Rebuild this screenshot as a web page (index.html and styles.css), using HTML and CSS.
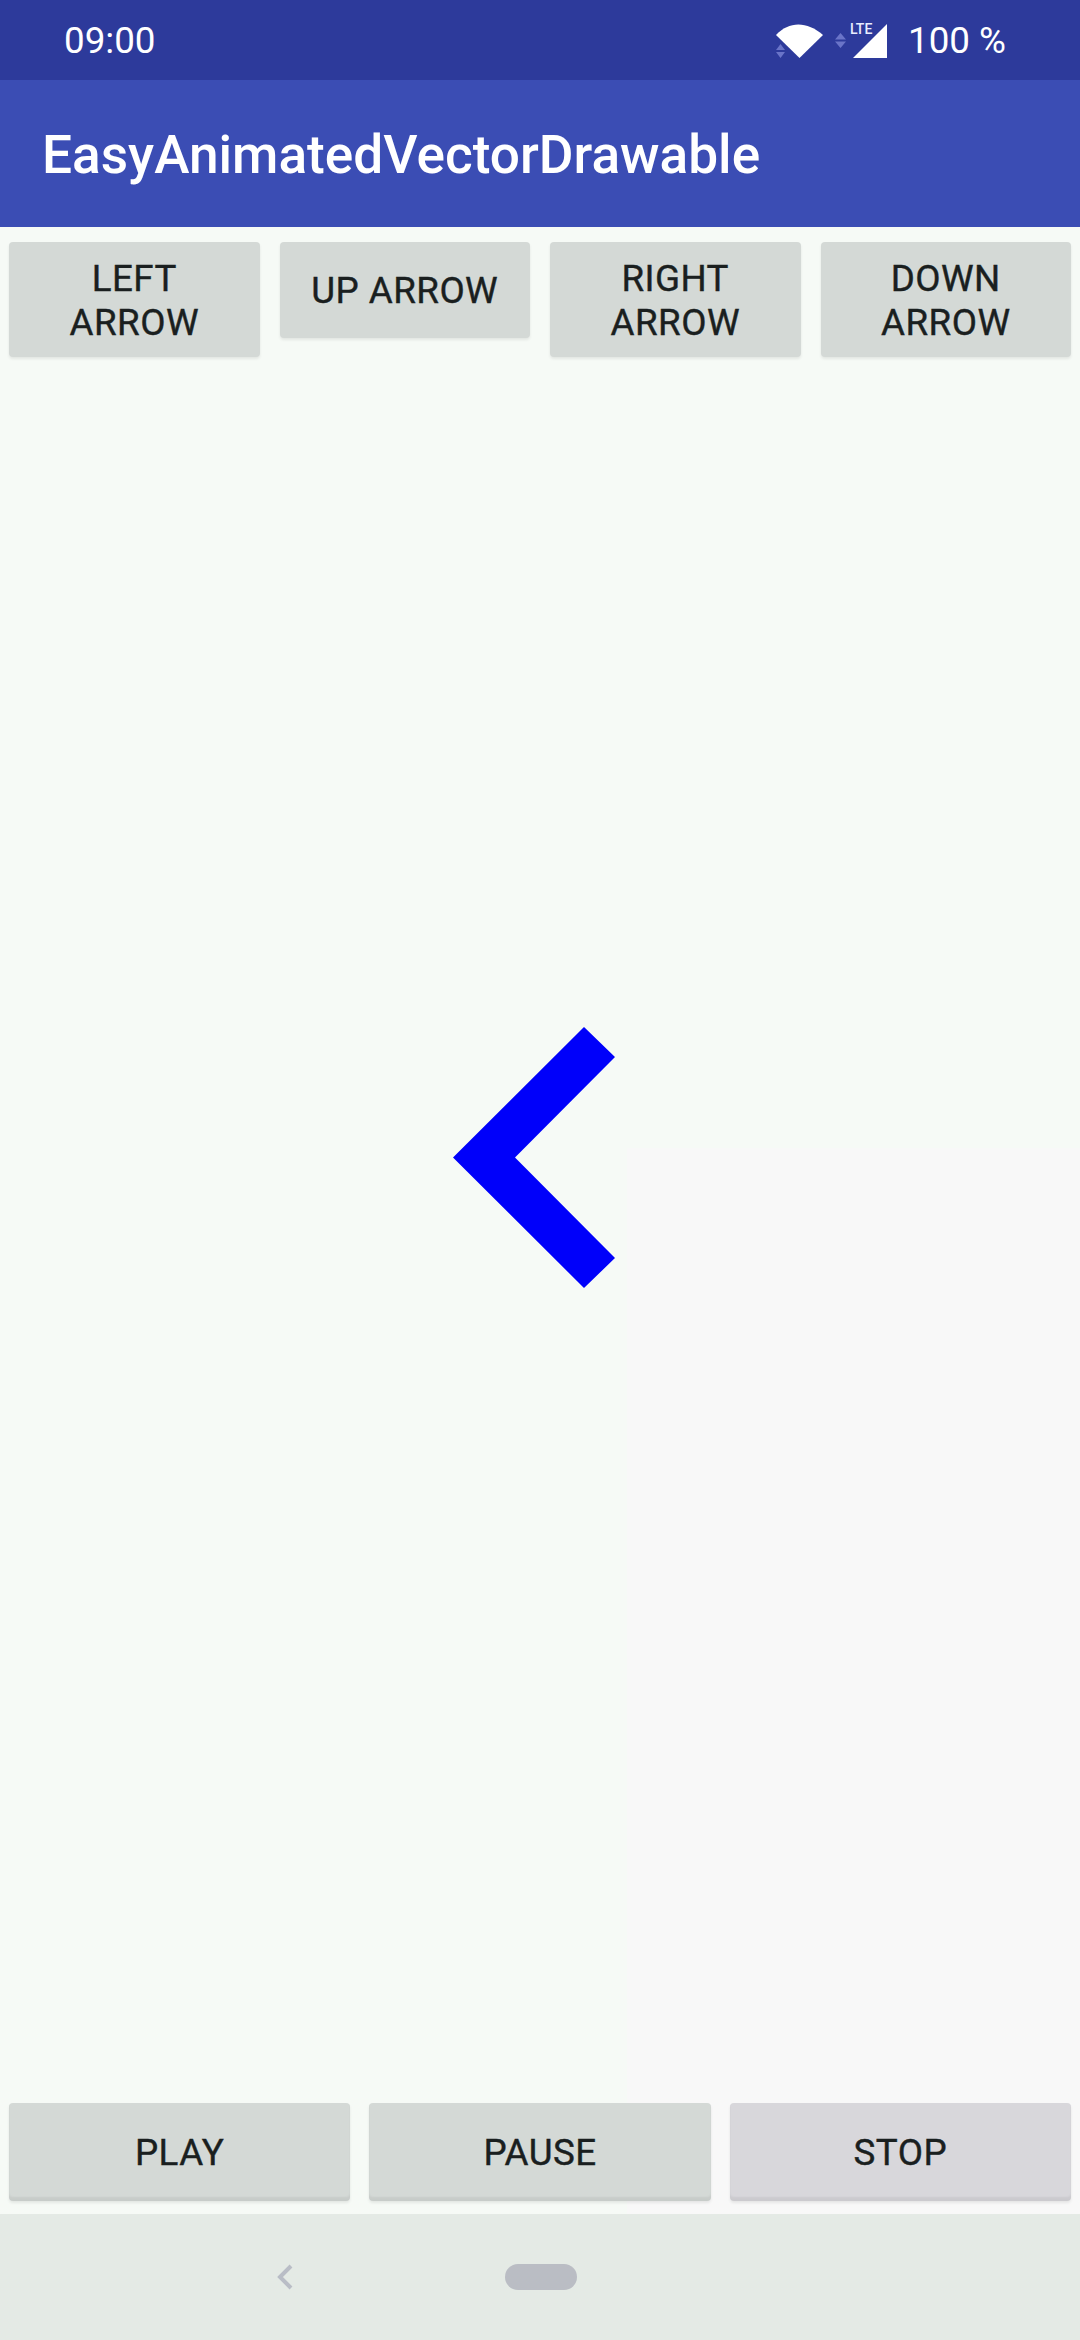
FILE: index.html
```html
<!DOCTYPE html>
<html lang="en">
<head>
<meta charset="utf-8">
<title>EasyAnimatedVectorDrawable</title>
<link rel="stylesheet" href="styles.css">
</head>
<body>
<div class="screen">
  <header class="status">
    <span class="time">09:00</span>
    <div class="status-right">
      <svg class="wifi" width="52" height="40" viewBox="0 0 52 40">
        <path class="faint" d="M4 29 L8.500 23 L13 29 Z M4 31 L13 31 L8.500 37 Z"/>
        <path class="solid" d="M4 14 C 17 0 35 0 51 14 L27.500 37 Z"/>
      </svg>
      <svg class="cell" width="60" height="40" viewBox="0 0 60 40">
        <path class="faint" d="M1 18.500 L6.500 12 L12 18.500 Z M1 20.500 L12 20.500 L6.500 27 Z"/>
        <text class="lte" x="16" y="13">LTE</text>
        <path class="solid" d="M53 3 V37 H19 Z"/>
      </svg>
      <span class="battery">100 %</span>
    </div>
  </header>
  <div class="appbar"><h1 class="title">EasyAnimatedVectorDrawable</h1></div>
  <main class="content">
    <div class="row row-top">
      <button class="btn">LEFT ARROW</button>
      <button class="btn btn-short">UP ARROW</button>
      <button class="btn">RIGHT ARROW</button>
      <button class="btn">DOWN ARROW</button>
    </div>
    <div class="canvas">
      <svg class="arrow" width="162" height="261" viewBox="0 0 162 261">
        <path d="M131 0 L162 30 L62 130.500 L162 231 L131 261 L0 130.500 Z"/>
      </svg>
    </div>
    <div class="row row-bottom">
      <button class="btn btn-wide">PLAY</button>
      <button class="btn btn-wide">PAUSE</button>
      <button class="btn btn-wide btn-stop">STOP</button>
    </div>
  </main>
  <nav class="navbar">
    <svg class="back" width="16" height="26" viewBox="0 0 16 26"><path d="M14 2 L3 13 L14 24"/></svg>
    <span class="home"></span>
  </nav>
</div>
</body>
</html>
```
FILE: styles.css
```css
* { box-sizing: border-box; }
html, body { margin: 0; padding: 0; }
body { width: 1080px; height: 2340px; overflow: hidden; font-family: Roboto, "Liberation Sans", sans-serif; }
.screen { width: 1080px; height: 2340px; display: flex; flex-direction: column; background: #f6faf6; }
.status { height: 80px; flex: none; background: #2d3a9b; color: #fff; display: flex; align-items: center; justify-content: space-between; padding: 1px 74px 0 64px; font-size: 36.75px; }
.time { line-height: 79px; }
.status-right { display: flex; align-items: center; }
.wifi { margin-right: 10px; }
.cell { margin-right: 14px; }
.battery { line-height: 79px; }
.solid { fill: #fff; }
.faint { fill: #6a74c8; }
.lte { fill: #e8ecff; font: 500 14px Roboto, sans-serif; }
.appbar { height: 147px; flex: none; background: #3b4db4; display: flex; align-items: center; padding: 2px 0 0 42px; }
.title { margin: 0; color: #fff; font-size: 53.2px; font-weight: 500; line-height: 60px; }
.content { flex: 1; display: flex; flex-direction: column; min-height: 0; background: linear-gradient(#f8f8f8, #f8f8f8) right bottom / 453px 1066px no-repeat; }
.row { display: flex; gap: 20px; padding: 0 9px; }
.row-top { padding-top: 15px; align-items: flex-start; }
.row-bottom { padding-bottom: 13px; gap: 19px; }
.btn { flex: 1 1 0; min-width: 0; height: 115px; border: 0; margin: 0; padding: 2px 20px 0; border-radius: 4px; background: #d4d9d6; color: #1a1f1f; font-family: Roboto, sans-serif; font-size: 36.75px; font-weight: 400; letter-spacing: .012em; -webkit-text-stroke: .4px #1a1f1f; line-height: 43.5px; text-align: center; box-shadow: 0 2px 3px rgba(0,0,0,.08); }
.btn-short { height: 96px; }
.btn-wide { height: 98px; box-shadow: inset 0 -4px 2px rgba(0,0,0,.06), 0 2px 3px rgba(0,0,0,.08); }
.btn-stop { background: #d8d7db; }
.canvas { flex: 1; display: flex; align-items: flex-start; justify-content: center; min-height: 0; padding-top: 670px; }
.arrow { fill: #0000fa; transform: translateX(-6px); }
.navbar { height: 126px; flex: none; background: #e4eae5; display: flex; align-items: center; padding: 0 0 0 277px; gap: 212px; }
.back path { fill: none; stroke: #b9bdc6; stroke-width: 4px; }
.home { width: 72px; height: 26px; border-radius: 13px; background: #babdc4; }
```
